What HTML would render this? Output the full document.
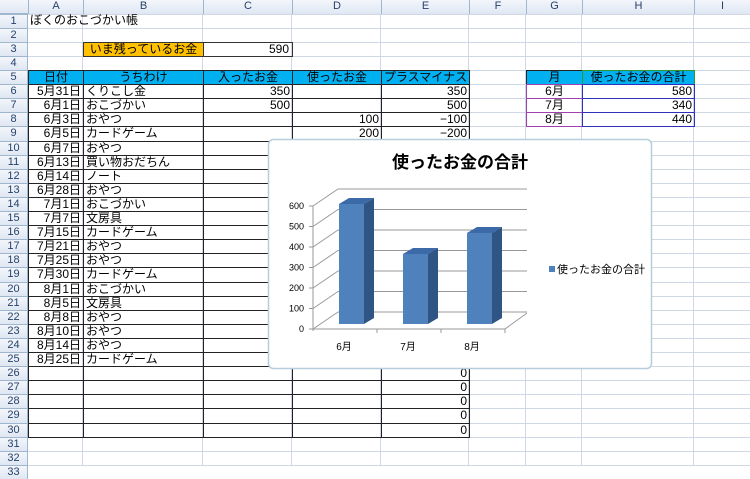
<!DOCTYPE html>
<html><head><meta charset="utf-8">
<style>
body{margin:0;width:750px;height:465px;overflow:hidden;background:#fff;position:relative;font-family:"Liberation Sans","Noto Sans CJK JP",sans-serif;font-size:12px;color:#000}
.c{position:absolute;box-sizing:border-box;white-space:nowrap;line-height:13px;overflow:hidden}
.hd{background:linear-gradient(#f3f6fb,#dfe7f3);color:#27416b;text-align:center;font-size:11px}
</style></head><body>
<div id="g"></div>
<svg id="chart" style="position:absolute;left:0;top:0" width="750" height="465">
<rect x="268.5" y="139.5" width="383" height="229" rx="5" fill="#fff" stroke="#b5cedb" stroke-width="1.5"/>
<text x="460" y="168" font-size="17" font-weight="bold" text-anchor="middle" font-family="Liberation Sans,Noto Sans CJK JP,sans-serif">使ったお金の合計</text>
<g stroke="#999" stroke-width="1" fill="none">
<path d="M338 189H527M338 209.5H527M338 230H527M338 250.5H527M338 271H527M338 291.5H527M338 312H527"/>
<path d="M313 206L338 189M313 226.5L338 209.5M313 247L338 230M313 267.5L338 250.5M313 288L338 271M313 308.5L338 291.5M313 329L338 312"/>
<path d="M313 329H505L527 313M313 206V331M309 206H313M309 226.5H313M309 247H313M309 267.5H313M309 288H313M309 308.5H313M309 329H313M377 329v4M441 329v4M505 329v4"/>
</g>
<g font-size="9" font-family="Liberation Sans,Noto Sans CJK JP,sans-serif" text-anchor="end">
<text x="304" y="209">600</text><text x="304" y="229.5">500</text><text x="304" y="250">400</text><text x="304" y="270.5">300</text><text x="304" y="291">200</text><text x="304" y="311.5">100</text><text x="304" y="332">0</text>
</g>
<g font-size="10" font-family="Liberation Sans,Noto Sans CJK JP,sans-serif" text-anchor="middle">
<text x="344" y="350">6月</text><text x="408" y="350">7月</text><text x="472" y="350">8月</text>
</g>
<g>
<polygon points="339,204 349,198 374,198 364,204" fill="#3c6aa8"/><polygon points="364,204 374,198 374,318 364,324" fill="#2f5585"/><rect x="339" y="204" width="25" height="120" fill="#4f81bd"/>
<polygon points="403,254 413,248 438,248 428,254" fill="#3c6aa8"/><polygon points="428,254 438,248 438,318 428,324" fill="#2f5585"/><rect x="403" y="254" width="25" height="70" fill="#4f81bd"/>
<polygon points="467,233 477,227 502,227 492,233" fill="#3c6aa8"/><polygon points="492,233 502,227 502,318 492,324" fill="#2f5585"/><rect x="467" y="233" width="25" height="91" fill="#4f81bd"/>
</g>
<rect x="549" y="266" width="6" height="6" fill="#4f81bd"/>
<text x="557" y="273" font-size="11" font-family="Liberation Sans,Noto Sans CJK JP,sans-serif">使ったお金の合計</text>
</svg>
<script>
var cols=[0,28,83,203,292,381,469,526,582,694,750],names=["","A","B","C","D","E","F","G","H","I"];
var T=14;function rt(r){return Math.round(13.6+(r-1)*14.1)}
var h="";
for(var i=1;i<cols.length-1;i++)h+='<div class="c" style="left:'+(cols[i]-1)+'px;top:0;width:1px;height:465px;background:#d0d7e5"></div>';
for(var r=1;r<=33;r++)h+='<div class="c" style="left:0;top:'+(rt(r))+'px;width:750px;height:1px;background:#d0d7e5"></div>';
h+='<div class="c hd" style="left:0;top:0;width:750px;height:'+T+'px;border-bottom:1px solid #9eb6ce"></div>';
for(var i=1;i<cols.length-1;i++)h+='<div class="c hd" style="left:'+cols[i]+'px;top:0;width:'+(cols[i+1]-cols[i])+'px;height:'+T+'px;border-left:1px solid #9eb6ce;line-height:13px">'+names[i]+'</div>';
for(var r=1;r<=33;r++)h+='<div class="c hd" style="left:0;top:'+rt(r)+'px;width:28px;height:'+(rt(r+1)-rt(r))+'px;border-top:1px solid #9eb6ce;border-right:1px solid #9eb6ce;line-height:13px">'+r+'</div>';
function cell(c1,c2,r,txt,st){h+='<div class="c" style="left:'+cols[c1]+'px;top:'+rt(r)+'px;width:'+(cols[c2+1]-cols[c1]+1)+'px;height:'+(rt(r+1)-rt(r)+1)+'px;'+(st||'')+'">'+(txt||'')+'</div>'}
cell(1,2,1,'ぼくのおこづかい帳','padding-left:2px');
cell(2,2,3,'いま残っているお金','background:#ffc000;border:1px solid #333;text-align:center');
cell(3,3,3,'590','border:1px solid #333;text-align:right;padding-right:3px');
var hd=['日付','うちわけ','入ったお金','使ったお金','プラスマイナス'];
for(var i=0;i<5;i++)cell(i+1,i+1,5,hd[i],'background:#00b0f0;border:1px solid #222;text-align:center');
var d=[['5月31日','くりこし金','350','','350'],['6月1日','おこづかい','500','','500'],['6月3日','おやつ','','100','−100'],['6月5日','カードゲーム','','200','−200'],['6月7日','おやつ'],['6月13日','買い物おだちん'],['6月14日','ノート'],['6月28日','おやつ'],['7月1日','おこづかい'],['7月7日','文房具'],['7月15日','カードゲーム'],['7月21日','おやつ'],['7月25日','おやつ'],['7月30日','カードゲーム'],['8月1日','おこづかい'],['8月5日','文房具'],['8月8日','おやつ'],['8月10日','おやつ'],['8月14日','おやつ'],['8月25日','カードゲーム']];
for(var r=6;r<=30;r++){var x=d[r-6]||['','','','',r>25?'0':''];
for(var i=0;i<5;i++){var v=x[i]||'';cell(i+1,i+1,r,v,'border:1px solid #222;padding:0 2px;'+(i==1?'':'text-align:right;'))}}
cell(7,7,5,'月','background:#00b0f0;border:1px solid #222;text-align:center');
cell(8,8,5,'使ったお金の合計','background:#00b0f0;border:1px solid #2a9a2a;text-align:center');
var m=[['6月','580'],['7月','340'],['8月','440']];
for(var i=0;i<3;i++){cell(7,7,6+i,m[i][0],'border:1px solid #a040b0;text-align:center');cell(8,8,6+i,m[i][1],'border:1px solid #3030c0;text-align:right;padding-right:2px')}
document.getElementById('g').innerHTML=h;
document.body.appendChild(document.getElementById('chart'));
</script>
</body></html>
